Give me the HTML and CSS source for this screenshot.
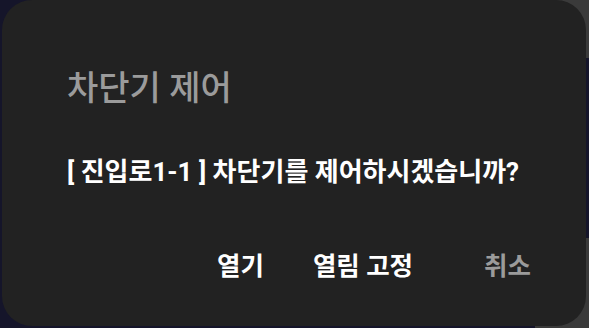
FILE: index.html
```html
<!DOCTYPE html>
<html lang="ko">
<head>
  <meta charset="UTF-8">
  <meta name="viewport" content="width=device-width, initial-scale=1.0">
  <title>차단기 제어</title>
  <link rel="stylesheet" href="styles.css">
</head>
<body>
  <div class="dialog">
    <h2 class="title">차단기 제어</h2>
    <p class="msg">[ 진입로1-1 ] 차단기를 제어하시겠습니까?</p>
    <div class="btns">
      <button class="btn">열기</button>
      <button class="btn">열림 고정</button>
      <button class="btn cancel">취소</button>
    </div>
  </div>
</body>
</html>
```

FILE: styles.css
```css
*{
  margin: 0;
  padding: 0;
  box-sizing: border-box;
}
html, body{
  width: 589px;
  height: 328px;
  overflow: hidden;
}
body{
  font-family: Roboto, "Noto Sans CJK KR", sans-serif;
  background:
    linear-gradient(#3a3a3a, #3a3a3a) right top / 60px 58px no-repeat,
    linear-gradient(#3a3a3a, #3a3a3a) right bottom / 54px 90px no-repeat,
    #15152a;
}
.dialog{
  width: 584px;
  height: 326px;
  margin-left: 2px;
  background: #222222;
  border-radius: 30px;
  padding: 67px 0 0 65px;
}
.title{
  font-size: 34px;
  line-height: 42px;
  font-weight: 500;
  color: #9b9b9b;
}
.msg{
  margin-top: 46px;
  font-size: 26px;
  line-height: 34px;
  font-weight: 700;
  color: #ffffff;
}
.btns{
  display: flex;
  justify-content: flex-end;
  gap: 25px;
  margin-top: 60px;
  padding-right: 43px;
}
.btn{
  background: none;
  border: none;
  font-family: inherit;
  font-size: 25.5px;
  line-height: 34px;
  font-weight: 700;
  color: #ffffff;
  padding: 0 12px;
}
.cancel{
  margin-left: 22px;
  color: #9b9b9b;
}
```
